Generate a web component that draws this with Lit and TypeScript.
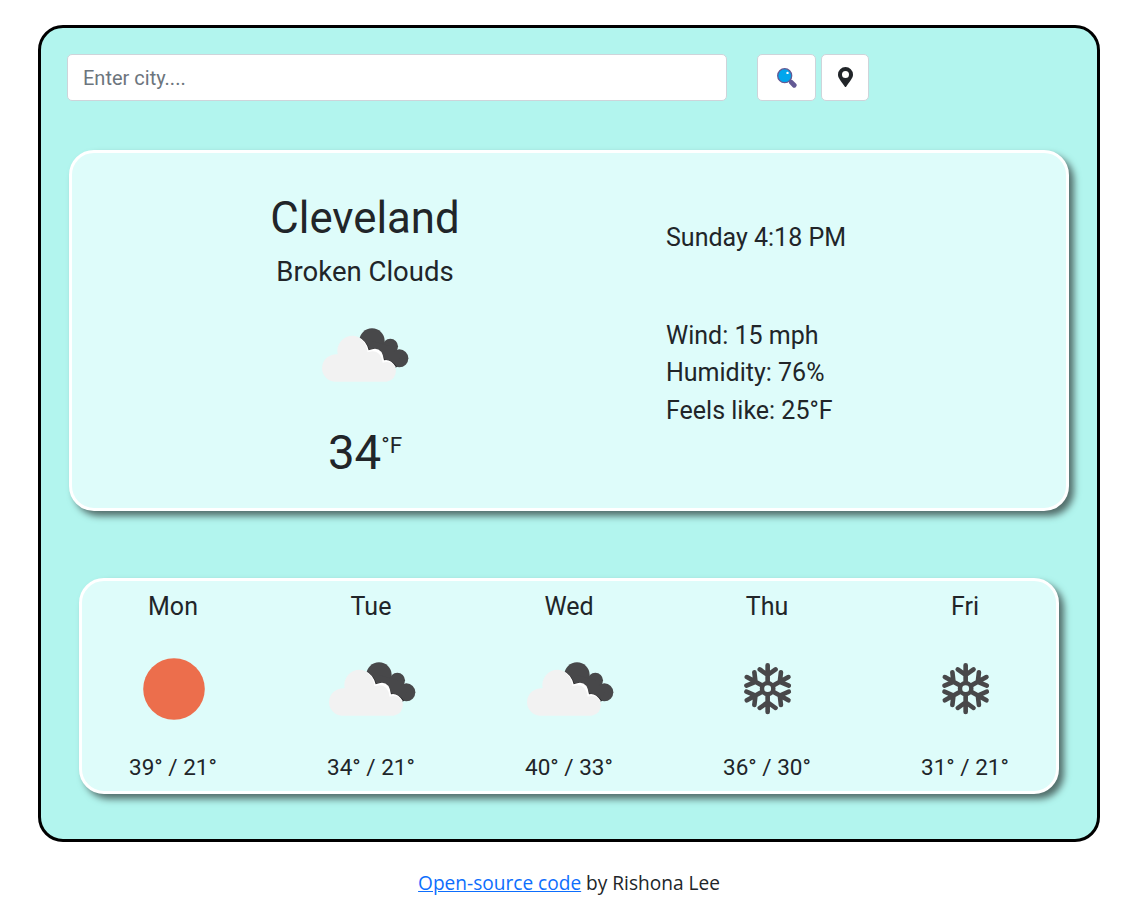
import { LitElement, html, svg, css } from "lit";
import { customElement } from "lit/decorators.js";

const cloudIcon = html`<svg class="clouds" viewBox="60 48 272 174" aria-hidden="true">
  <g fill="#48484a">
    <circle cx="216" cy="93" r="38" /><circle cx="271" cy="109" r="23" /><circle cx="298" cy="145" r="27" />
    <path d="M216 93 L271 109 L298 145 L290 171 L240 150 L190 110Z" />
  </g>
  <g fill="#222224">
    <path d="M180 84 Q200 94 208 119 Q240 106 254 149 Q276 148 291 171 L282 174 L240 160 L200 125Z" />
  </g>
  <g fill="#fff">
    <path d="M174 82 Q198 90 206 121 Q246 104 252 151 Q272 146 288 172 L270 180 L180 150Z" />
  </g>
  <path fill="#f2f2f2" d="M104 215 A40 41 0 0 1 66 175 A42 42 0 0 1 113 133 A46 46 0 0 1 160 77 Q194 80 203 127 Q241 114 248 158 Q280 150 288 180 Q288 210 260 215Z" />
</svg>`;

const snowIcon = html`<svg class="snow" viewBox="-80 -80 160 160" aria-hidden="true">
  <g fill="none" stroke="#48484a" stroke-width="13.5" stroke-linecap="round" stroke-linejoin="round" transform="scale(1.03 1)">
    <circle r="16.5" stroke-width="13" />
    ${[0, 60, 120, 180, 240, 300].map(
      (a) => svg`<path transform=${`rotate(${a})`} d="M0 -20V-70M-23 -58L0 -41L23 -58" />`
    )}
  </g>
</svg>`;

const sunIcon = html`<svg class="sun" viewBox="0 0 62 62" aria-hidden="true"><circle cx="31" cy="31" r="30.8" fill="#ec6e4c" /></svg>`;

const icons = { sun: sunIcon, clouds: cloudIcon, snow: snowIcon };
type Icon = keyof typeof icons;

const days: { name: string; icon: Icon; temps: string }[] = [
  { name: "Mon", icon: "sun", temps: "39° / 21°" },
  { name: "Tue", icon: "clouds", temps: "34° / 21°" },
  { name: "Wed", icon: "clouds", temps: "40° / 33°" },
  { name: "Thu", icon: "snow", temps: "36° / 30°" },
  { name: "Fri", icon: "snow", temps: "31° / 21°" },
];

@customElement("app-root")
export class AppRoot extends LitElement {
  static styles = css`
    :host { display: block; height: 916px; overflow: hidden; background: #fff; color: #212529; font-family: Roboto, sans-serif; }
    * { box-sizing: border-box; }
    svg { display: block; }
    .frame { width: 1062px; height: 817px; margin: 25px 0 0 38px; border: 3px solid #000; border-radius: 25px; background: #b2f5ee; padding: 26px; }
    .outer { display: flow-root; }
    .search { display: flex; height: 47px; }
    input { width: 660px; height: 47px; border: 1px solid #ced4da; border-radius: 5px; padding: 0 15px; font: 20px Roboto, sans-serif; background: #fff; outline: none; }
    input::placeholder { color: #6c757d; opacity: 1; }
    button { display: grid; place-items: center; height: 47px; padding: 0; background: #fff; border: 1px solid #ced4da; border-radius: 5px; }
    .find { width: 59px; margin-left: 30px; }
    .locate { width: 48px; margin-left: 5px; padding-bottom: 1px; }
    .card { border: 3px solid #fff; background: #defcfa; box-shadow: 5px 5px 7px 0 #536e6b; }
    .current { display: flex; width: 1000px; height: 361px; margin: 49px 0 0 2px; border-radius: 25px; }
    .place { display: flex; flex-direction: column; align-items: center; width: 586px; padding-top: 38px; }
    .city { margin: 0; font-size: 43.75px; font-weight: 400; line-height: 54px; }
    .sky { margin-top: 6px; font-size: 27.5px; line-height: 41px; }
    .place .clouds { margin-top: 34px; }
    .clouds { width: 90.7px; height: 58px; }
    .temp { display: flex; margin-top: 33px; font-size: 47.5px; line-height: 72px; }
    .unit { font-size: 22.5px; line-height: 57px; }
    .facts { margin-left: 8px; padding-top: 66px; font-size: 25px; line-height: 37.5px; }
    .time { margin-bottom: 60px; }
    .forecast { width: 980px; height: 216px; margin: 67px 0 0 12px; border-radius: 25px; }
    .days { display: grid; grid-template-columns: repeat(5, 198px); margin: 0 -8px; }
    .day { display: flex; flex-direction: column; align-items: center; padding-top: 7px; font-size: 25px; line-height: 37.5px; }
    .pic { display: grid; place-items: center; height: 124px; margin-left: 1px; padding-top: 3px; }
    .pic .clouds { margin-left: 2px; }
    .sun { width: 62px; height: 62px; }
    .snow { width: 53.3px; height: 53.3px; }
    .temps { font-size: 22.5px; line-height: 34px; }
    .credit { margin-top: 26px; padding-right: 5px; text-align: center; font: 19.1px/30px "Open Sans", sans-serif; }
    .credit a { color: #0d6efd; text-decoration: underline; }
  `;

  render() {
    return html`<div class="outer">
      <main class="frame">
        <div class="search">
          <input type="text" placeholder="Enter city...." />
          <button class="find" aria-label="Search">
            <svg width="20" height="20" viewBox="0 0 20 20">
              <path d="M14.4 14.4L17.2 17.2" stroke="#635994" stroke-width="4.8" stroke-linecap="round" />
              <path d="M11 11l3 3" stroke="#635994" stroke-width="2" />
              <circle cx="7.7" cy="7.7" r="7" fill="#00a6ed" stroke="#635994" stroke-width="1.3" />
              <circle cx="10.5" cy="4.9" r="1.2" fill="#fff" />
            </svg>
          </button>
          <button class="locate" aria-label="Current location">
            <svg width="15" height="20" viewBox="0 0 384 512">
              <path fill="#212529" d="M172 502C27 291 0 270 0 192a192 192 0 0 1 384 0c0 78-27 99-172 310a24 24 0 0 1-40 0zM192 282a90 90 0 1 0 0-180 90 90 0 0 0 0 180z" />
            </svg>
          </button>
        </div>
        <section class="card current">
          <div class="place">
            <h1 class="city">Cleveland</h1>
            <div class="sky">Broken Clouds</div>
            ${cloudIcon}
            <div class="temp"><span>34</span><span class="unit">°F</span></div>
          </div>
          <div class="facts">
            <div class="time">Sunday 4:18 PM</div>
            <div>Wind: 15 mph</div>
            <div>Humidity: 76%</div>
            <div>Feels like: 25°F</div>
          </div>
        </section>
        <section class="card forecast">
          <div class="days">
            ${days.map(
              (d) => html`<div class="day">
                <div>${d.name}</div>
                <div class="pic">${icons[d.icon]}</div>
                <div class="temps">${d.temps}</div>
              </div>`
            )}
          </div>
        </section>
      </main>
      <div class="credit"><a href="#">Open-source code</a> by Rishona Lee</div>
    </div>`;
  }
}
